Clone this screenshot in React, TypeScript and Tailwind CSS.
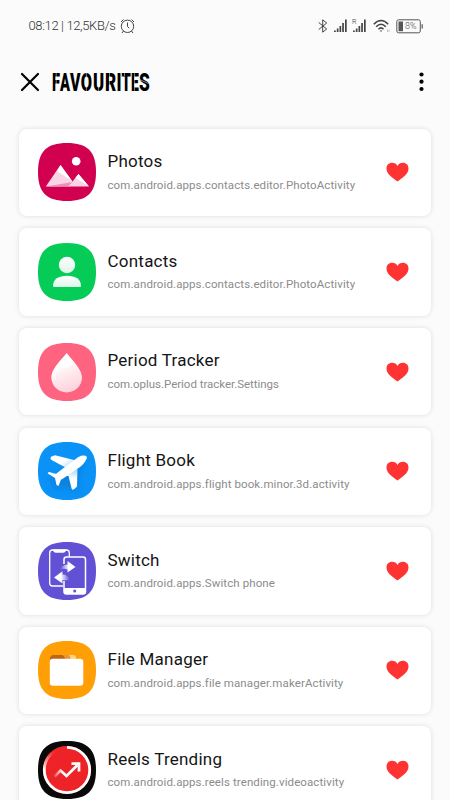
import type { ReactNode } from 'react';

const SQUIRCLE =
  'M29 0C49.5 0 58 8.500 58 29S49.500 58 29 58 0 49.500 0 29 8.500 0 29 0Z';

function AppIcon({ color, children }: { color: string; children: ReactNode }) {
  return (
    <svg className="h-[58px] w-[58px] shrink-0" viewBox="0 0 58 58">
      <path d={SQUIRCLE} fill={color} />
      {children}
    </svg>
  );
}

const photos = (
  <AppIcon color="#d20050">
    <circle cx="38.200" cy="18.300" r="4.300" fill="#fff" />
    <path d="M22.500 22 34.500 38.500 32 43.500H7.800Z" fill="#fbd3e6" />
    <path d="M22.500 22 34 38 19 28Z" fill="#fff" />
    <path d="M7.800 43.500 35 39 31 43.500Z" fill="#ee8fb9" />
    <path d="M40.500 31 51 43.500H30.500Z" fill="#fbd3e6" />
    <path d="M40.500 31 51 43.500 37.500 34.800Z" fill="#fff" />
  </AppIcon>
);

const contacts = (
  <AppIcon color="#04cc57">
    <defs>
      <linearGradient id="person" x1="0" y1="0" x2="0" y2="1">
        <stop offset="0" stopColor="#fff" />
        <stop offset="1" stopColor="#dcf6e8" />
      </linearGradient>
    </defs>
    <circle cx="29" cy="22" r="8.200" fill="url(#person)" />
    <path d="M15 43C15 36 20.500 32.700 29 32.700S43 36 43 43Q43 44 42 44H16Q15 44 15 43Z" fill="url(#person)" />
  </AppIcon>
);

const period = (
  <AppIcon color="#fe6380">
    <defs>
      <linearGradient id="drop" x1="0.300" y1="0" x2="0.600" y2="1">
        <stop offset="0.200" stopColor="#fff" />
        <stop offset="1" stopColor="#fdd0da" />
      </linearGradient>
      <linearGradient id="gloss" x1="0.600" y1="0" x2="0.400" y2="1">
        <stop offset="0" stopColor="#fff" />
        <stop offset="1" stopColor="#fff" stopOpacity="0.300" />
      </linearGradient>
    </defs>
    <path d="M28.700 10C31 14 44 25 44 34.500A15.300 15 0 0 1 13.400 34.500C13.400 25 26 14.500 28.700 10Z" fill="url(#drop)" />
    <path d="M28.700 10C30 13 36 18 34 22C31 27 21 23 19 31C18 36 17 38 14 38C11 27 26 14.500 28.700 10Z" fill="url(#gloss)" />
  </AppIcon>
);

const flight = (
  <AppIcon color="#0b92f6">
    <defs>
      <linearGradient id="wing" x1="0" y1="0" x2="1" y2="0.800">
        <stop offset="0" stopColor="#fff" />
        <stop offset="0.550" stopColor="#fff" />
        <stop offset="1" stopColor="#9fd3fd" />
      </linearGradient>
      <linearGradient id="wing2" x1="0" y1="0" x2="0" y2="1">
        <stop offset="0" stopColor="#8cccff" />
        <stop offset="0.500" stopColor="#fff" />
      </linearGradient>
      <filter id="soft" x="-30%" y="-30%" width="160%" height="160%">
        <feGaussianBlur stdDeviation="3" />
      </filter>
    </defs>
    <path d="M12 36 30 27 48 20 41 32 40 49 30 47 24 44 18 49Z" fill="#0875cf" opacity="0.550" filter="url(#soft)" />
    <path d="M29.500 26.500 13.500 18Q11.500 16 13.500 14.500L17 13.200 38 18.500Z" fill="url(#wing)" />
    <path d="M27.500 34 39.500 25 39 44.500 36 47.300Q34.300 48.500 33.600 46.500L30.500 34Z" fill="url(#wing2)" />
    <path d="M18.500 32 11 30 9.500 31.300 17 36 18.500 43 20.500 44 23 37.500Z" fill="#fff" />
    <path d="M43 13.800Q50 12.700 48.600 16.700C47 20.500 44 24 39 27L24 37.300Q18 40 17.200 36C17 34 17 32.500 19 31L37 17.500Q40 15 43 13.800Z" fill="#fff" />
  </AppIcon>
);

const switchPhone = (
  <AppIcon color="#6251d5">
    <defs>
      <linearGradient id="right">
        <stop offset="0" stopColor="#fff" stopOpacity="0" />
        <stop offset="0.550" stopColor="#fff" />
      </linearGradient>
      <linearGradient id="left">
        <stop offset="0.450" stopColor="#fff" />
        <stop offset="1" stopColor="#fff" stopOpacity="0" />
      </linearGradient>
    </defs>
    <path d="M25 44H14.500Q11.700 44 11.700 41V11Q11.700 8 14.500 8H28.500Q31.300 8 31.300 11V15" fill="none" stroke="#fff" strokeWidth="1.300" />
    <path d="M14.500 7.500H28.500Q27.500 10.700 25.500 10.700H17.500Q15.500 10.700 14.500 7.500Z" fill="#fff" />
    <path d="M26 22V17.500Q26 15 28.500 15H45Q47.500 15 47.500 17.500V49.500Q47.500 52 45 52H28.500Q26 52 26 49.500V39" fill="none" stroke="#fff" strokeWidth="1.500" />
    <path d="M26 46H47.500V50Q47.500 52 45 52H28.500Q26 52 26 50Z" fill="#fff" />
    <circle cx="36.700" cy="49" r="1.500" fill="#6251d5" />
    <path d="M22 28Q23.500 22.700 29.500 22.500V19L37.500 25 29.500 30.500V27.500Q25.500 26 22 28Z" fill="url(#right)" />
    <path d="M31.500 38Q29 38.500 24.500 38V41.500L16 35.500 24.500 29.300V32.500Q30 32.500 31.500 38Z" fill="url(#left)" />
  </AppIcon>
);

const files = (
  <AppIcon color="#ff9e05">
    <path d="M27 14H35.500Q38 14 38 17V22H27Z" fill="#ffd27c" />
    <path d="M22 14H30Q32 14 32.500 18V22H22Z" fill="#e8923b" />
    <path d="M12 18Q12 14 15.500 14H23.500Q26 14 27 18V22H12Z" fill="#bd6514" />
    <rect x="11.800" y="17.800" width="33.500" height="27" rx="3.200" fill="#fff" />
  </AppIcon>
);

const reels = (
  <AppIcon color="#090909">
    <defs>
      <linearGradient id="ring" x1="0" y1="0" x2="0" y2="1">
        <stop offset="0.100" stopColor="#ef2528" />
        <stop offset="0.500" stopColor="#fff" />
      </linearGradient>
      <linearGradient id="trend">
        <stop offset="0" stopColor="#fff" stopOpacity="0.200" />
        <stop offset="0.350" stopColor="#fff" />
      </linearGradient>
    </defs>
    <circle cx="29" cy="29" r="24" fill="#ee2328" />
    <path d="M29 6.300A22.700 22.700 0 0 1 29 51.700" fill="none" stroke="#fff" strokeWidth="2.800" />
    <path d="M29 51.700A22.700 22.700 0 0 1 29 6.300" fill="none" stroke="url(#ring)" strokeWidth="2.800" />
    <path d="M16.500 35.500 22.500 29.500 28.500 35 39.500 24" fill="none" stroke="url(#trend)" strokeWidth="2.700" />
    <path d="M33.500 22.700H41V30.500" fill="none" stroke="#fff" strokeWidth="2.700" />
  </AppIcon>
);

const APPS = [
  { name: 'Photos', id: 'com.android.apps.contacts.editor.PhotoActivity', icon: photos, tracking: 'tracking-[0.1px]' },
  { name: 'Contacts', id: 'com.android.apps.contacts.editor.PhotoActivity', icon: contacts, tracking: 'tracking-[0.1px]' },
  { name: 'Period Tracker', id: 'com.oplus.Period tracker.Settings', icon: period, tracking: 'tracking-[-0.03px]' },
  { name: 'Flight Book', id: 'com.android.apps.flight book.minor.3d.activity', icon: flight, tracking: 'tracking-[0.1px]' },
  { name: 'Switch', id: 'com.android.apps.Switch phone', icon: switchPhone, tracking: 'tracking-[0.1px]' },
  { name: 'File Manager', id: 'com.android.apps.file manager.makerActivity', icon: files, tracking: 'tracking-[0.1px]' },
  { name: 'Reels Trending', id: 'com.android.apps.reels trending.videoactivity', icon: reels, tracking: 'tracking-[0.1px]' },
];

function Signal() {
  return (
    <svg className="h-[14px] w-[13px]" viewBox="0 0 13 14" fill="#444">
      <path d="M0 11.500H1.800V13H0ZM2.800 9.500H4.500V13H2.800ZM5.500 7H7.200V13H5.500ZM8.200 4H9.900V13H8.200ZM11 .5H12.700V13H11Z" />
    </svg>
  );
}

function StatusBar() {
  return (
    <div className="flex h-[52px] items-center justify-between pr-[26px] pl-[28.5px] text-[#333]">
      <div className="flex items-center">
        <span className="w-[88px] text-[13px] leading-4 font-light tracking-[-0.36px] whitespace-nowrap">08:12 | 12,5KB/s</span>
        <svg className="ml-[3.5px] h-[16px] w-[15px]" viewBox="0 0 15 16" fill="none" stroke="#444" strokeWidth="1">
          <circle cx="7.500" cy="8.300" r="6.200" />
          <path d="M7.500 4.500V8.500L9.200 10.200M1 4 3.500 1.500M14 4 11.500 1.500M3.500 13 2 15M11.500 13 13 15" />
        </svg>
      </div>
      <div className="flex items-center">
        <svg className="h-[14px] w-[10px]" viewBox="0 0 10 14" fill="none" stroke="#444" strokeWidth="1">
          <path d="M.7 3.500 8.700 10 4.700 13.200V.8L8.700 4 .7 10.500" />
        </svg>
        <div className="ml-[6px] flex"><Signal /></div>
        <div className="relative ml-[6px] flex">
          <Signal />
          <span className="absolute top-0 -left-px text-[7px] leading-[7px] font-light">R</span>
        </div>
        <svg className="ml-[7px] h-[14px] w-[18px]" viewBox="0 0 18 14" fill="none" stroke="#444" strokeWidth="1.600">
          <path d="M.8 5.200Q8 -2.200 15.200 5.200M3.200 7.800Q8 2.800 12.800 7.800M5.500 10.200Q8 7.700 10.500 10.200" />
          <path d="M6.800 11.400H9.200L8 13Z" fill="#444" stroke="none" />
          <path d="M14.500 10.500V13M16 10.500V13" stroke="#aaa" strokeWidth=".7" />
        </svg>
        <svg className="ml-[5px] h-[15px] w-[28px]" viewBox="0 0 28 15">
          <rect x=".8" y=".8" width="23.500" height="13" rx="1.800" fill="none" stroke="#555" strokeWidth="1" />
          <path d="M2.500 2.500H7V12.200H2.500Z" fill="#555" />
          <path d="M25.500 5.200H27V9.500H25.500Z" fill="#777" />
          <text x="9" y="10.200" fontSize="8.500" fontWeight="300" fill="#444" textLength="11.500" lengthAdjust="spacingAndGlyphs">8%</text>
        </svg>
      </div>
    </div>
  );
}

/* Heading letters, each with its left edge and drawn width. */
const HEADING = [
  { ch: 'F', x: 0, w: 8 },
  { ch: 'A', x: 8, w: 10 },
  { ch: 'V', x: 18, w: 10.5 },
  { ch: 'O', x: 28.800, w: 11.300 },
  { ch: 'U', x: 41, w: 11.200 },
  { ch: 'R', x: 53, w: 11.200 },
  { ch: 'I', x: 64.500, w: 5 },
  { ch: 'T', x: 69.500, w: 9.300 },
  { ch: 'E', x: 79, w: 7.800 },
  { ch: 'S', x: 87, w: 10.800 },
];

function Heading() {
  return (
    <svg className="ml-[12px] h-[24px] w-[100px] overflow-visible" viewBox="0 0 100 24">
      <g fontFamily="Roboto, sans-serif" fontWeight="900" fontSize="26.500">
        {HEADING.map(({ ch, x, w }) => (
          <text key={ch} x={x} y="21.400" textLength={w} lengthAdjust="spacingAndGlyphs">{ch}</text>
        ))}
      </g>
      {/* Stencil bridges */}
      <path d="M4.200 2V22M34.400 2V7M34.400 17V22M46.600 16V22M57.500 2V22M82.600 2V22M72.500 2V6" stroke="#fbfbfb" strokeWidth=".5" />
      <path d="M88 9.800 96.500 13.500" stroke="#fbfbfb" strokeWidth=".5" />
    </svg>
  );
}

export default function App() {
  return (
    <div className="h-[800px] w-[450px] overflow-hidden bg-[#fbfbfb] font-[Roboto,sans-serif]">
      <StatusBar />
      <header className="flex h-[60px] items-center justify-between pr-[26px] pl-[20px]">
        <div className="flex items-center">
          <svg className="h-[20px] w-[20px]" viewBox="0 0 20 20" stroke="#000" strokeWidth="2.200" strokeLinecap="round">
            <path d="M2 2 18 18M18 2 2 18" />
          </svg>
          <Heading />
        </div>
        <svg className="h-[20px] w-[5px]" viewBox="0 0 5 20">
          <circle cx="2.500" cy="2.500" r="2.100" />
          <circle cx="2.500" cy="9.700" r="2.100" />
          <circle cx="2.500" cy="17" r="2.100" />
        </svg>
      </header>
      <main className="flex flex-col gap-[12.2px] px-[19px] pt-[16.8px]">
        {APPS.map((app) => (
          <article key={app.name} className="flex h-[87.400px] shrink-0 items-center rounded-[8px] bg-white pr-[22px] pl-[19px] shadow-[0_0_5px_rgba(0,0,0,0.12)]">
            {app.icon}
            <div className="ml-[11.500px] flex-1 whitespace-nowrap">
              <h2 className="text-[17px] leading-[22px] tracking-[0.23px] text-[#151515]">{app.name}</h2>
              <p className={`mt-[2.6px] text-[11.5px] leading-[20px] text-[#8c8c8c] ${app.tracking}`}>{app.id}</p>
            </div>
            <svg className="h-[20px] w-[23px]" viewBox="0 0 23 20">
              <path d="M11.500 19.500C6 15.500.5 12 .5 6.500.5 3 3 .8 6 .8 8.500.8 10.500 2 11.500 4 12.500 2 14.500.8 17 .8 20 .8 22.500 3 22.500 6.500 22.500 12 17 15.500 11.500 19.500Z" fill="#ff3331" />
            </svg>
          </article>
        ))}
      </main>
    </div>
  );
}
